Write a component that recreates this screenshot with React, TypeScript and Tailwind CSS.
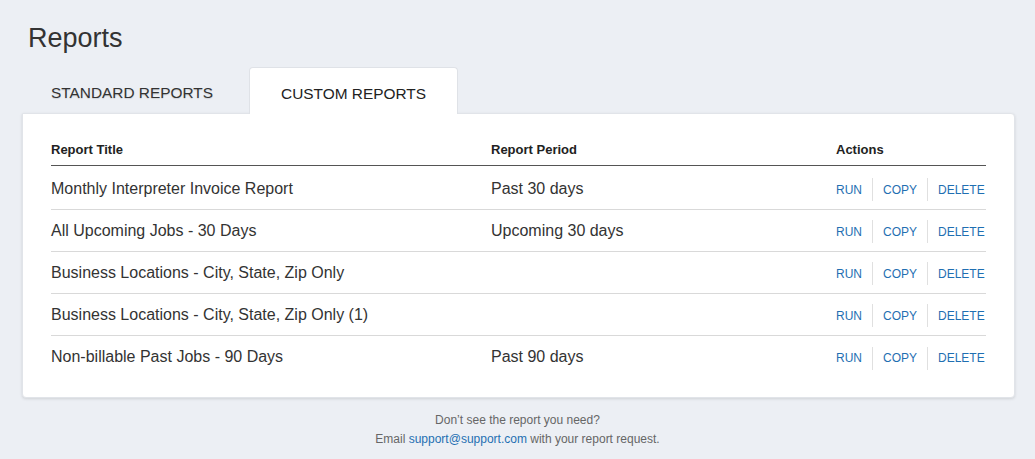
const reports = [
  { title: 'Monthly Interpreter Invoice Report', period: 'Past 30 days' },
  { title: 'All Upcoming Jobs - 30 Days', period: 'Upcoming 30 days' },
  { title: 'Business Locations - City, State, Zip Only', period: '' },
  { title: 'Business Locations - City, State, Zip Only (1)', period: '' },
  { title: 'Non-billable Past Jobs - 90 Days', period: 'Past 90 days' },
];

export default function App() {
  return (
    <div
      className="min-h-[459px] w-full bg-[#eceff4] text-[#333] pt-[22px] pl-[22px] pr-[20px]"
      style={{ fontFamily: '"Liberation Sans", Arial, sans-serif' }}
    >
      <h1 className="pl-[6px] text-[27px] leading-[32px] text-[#333]">Reports</h1>

      <div className="mt-[13px] flex items-end">
        <button className="h-[46px] w-[227px] pl-[29px] pt-[6px] text-left text-[15.4px] text-[#333] [text-shadow:0_1px_1px_rgba(0,0,0,0.12)]">
          STANDARD REPORTS
        </button>
        <button className="relative z-10 -mb-px h-[47px] w-[209px] rounded-t-[4px] border border-b-0 border-[#dfe2e7] bg-white pt-[6px] text-[15.4px] text-[#222]">
          CUSTOM REPORTS
        </button>
      </div>

      <div className="w-[993px] rounded-b-[4px] rounded-tr-[4px] border border-[#e1e4e9] bg-white px-[28px] pt-[20px] pb-[19px] shadow-[0_1px_3px_rgba(0,0,0,0.12)]">
        <div className="flex h-[32px] items-center border-b border-[#555] text-[13px] font-semibold text-[#222]">
          <div className="w-[440px] shrink-0">Report Title</div>
          <div className="w-[345px] shrink-0">Report Period</div>
          <div className="flex-1">Actions</div>
        </div>
        <div className="pt-[2px]">
          {reports.map((r, i) => (
            <div
              key={i}
              className={`flex h-[42px] items-center text-[16px] text-[#333] ${
                i < reports.length - 1 ? 'border-b border-[#d9d9d9]' : ''
              }`}
            >
              <div className="w-[440px] shrink-0">{r.title}</div>
              <div className="w-[345px] shrink-0">{r.period}</div>
              <div className="flex flex-1 items-center whitespace-nowrap pt-[2px] text-[12px] text-[#1f6fb2]">
                <a className="pr-[10px]">RUN</a>
                <span className="h-[23px] w-px bg-[#e0e0e0]" />
                <a className="px-[10px]">COPY</a>
                <span className="h-[23px] w-px bg-[#e0e0e0]" />
                <a className="pl-[10px]">DELETE</a>
              </div>
            </div>
          ))}
        </div>
      </div>

      <div className="mt-[13px] pr-[2px] text-center text-[12px] leading-[19px] text-[#666]">
        <p>Don’t see the report you need?</p>
        <p>
          Email <a className="text-[#1f6fb2]">support@support.com</a> with your report request.
        </p>
      </div>
    </div>
  );
}
